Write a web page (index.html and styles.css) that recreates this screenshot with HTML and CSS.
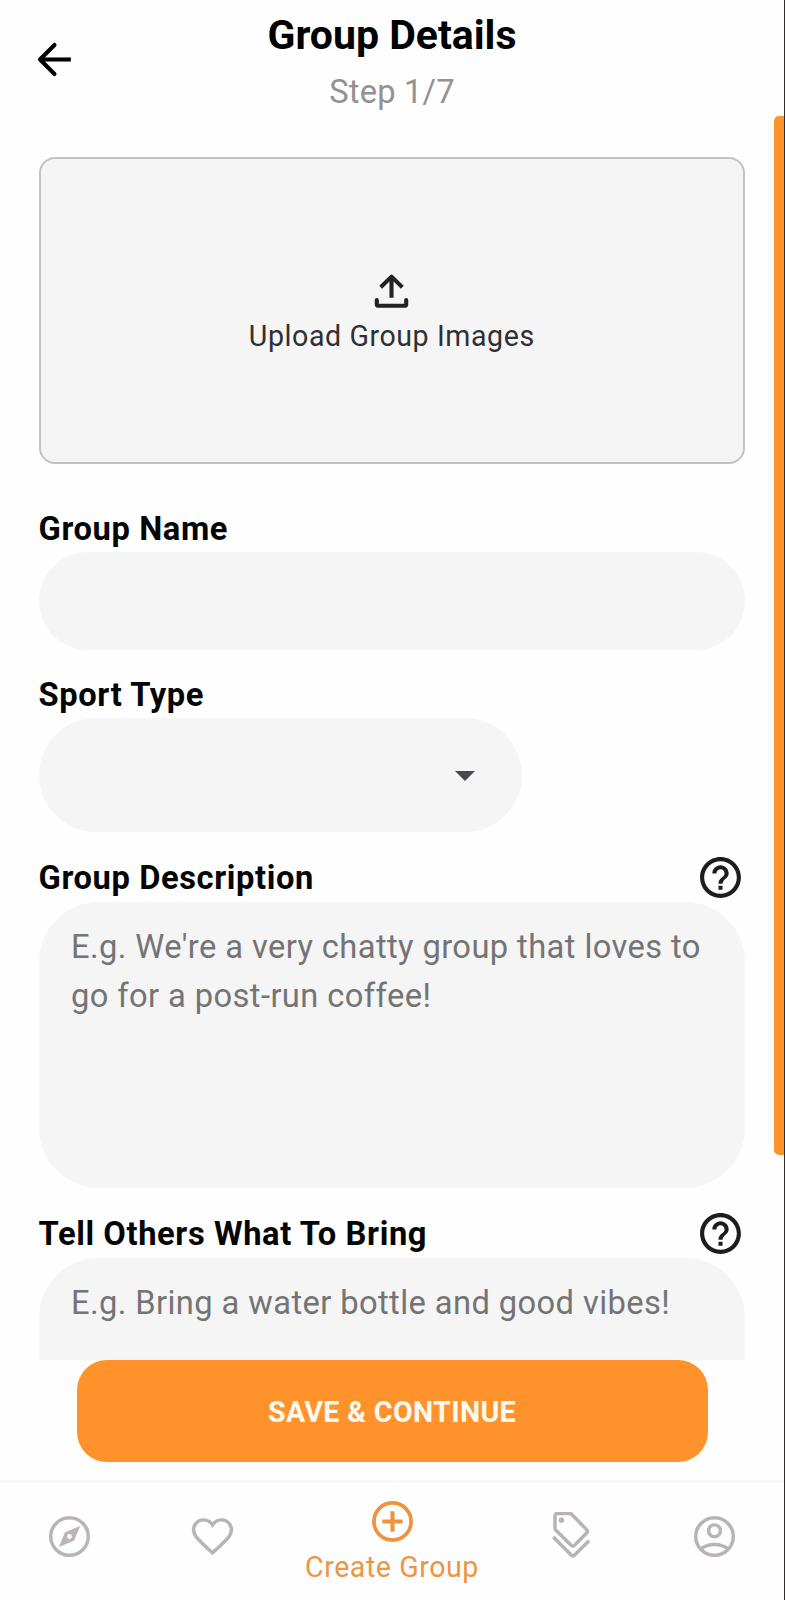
FILE: index.html
```html
<!DOCTYPE html>
<html lang="en">
<head>
<meta charset="utf-8">
<title>Group Details</title>
<link rel="stylesheet" href="styles.css">
</head>
<body>
<div class="app">
  <header class="header">
    <svg class="back" viewBox="0 0 24 24" fill="none" stroke="#000" stroke-width="2"><path d="M20 12H5"/><path d="M12 4.900 4.900 12l7.100 7.100" stroke-linecap="round" stroke-linejoin="round"/></svg>
    <div class="heading">
      <h1 class="title">Group Details</h1>
      <p class="step">Step 1/7</p>
    </div>
  </header>

  <main class="form">
    <div class="upload">
      <svg class="upload-icon" viewBox="0 0 24 24" fill="none" stroke="#222224" stroke-width="2" stroke-linecap="round" stroke-linejoin="round"><path d="M12 15V5.200M6.700 9.900 12 4.700l5.300 5.200" stroke-linecap="butt"/><path d="M4.800 16.200v2q0 .8.8.8h12.800q.8 0 .8-.8v-2"/></svg>
      <span class="upload-text">Upload Group Images</span>
    </div>

    <div class="label-row label-first"><h2 class="label">Group Name</h2></div>
    <div class="field field-name"></div>

    <div class="label-row label-sport"><h2 class="label">Sport Type</h2></div>
    <div class="field field-sport"><svg class="caret" viewBox="0 0 20 10"><path d="M0 0h20L10 10z" fill="#4b474e"/></svg></div>

    <div class="label-row label-help">
      <h2 class="label">Group Description</h2>
      <svg class="help" viewBox="0 0 24 24"><path fill="#1d1d1f" d="M11 18h2v-2h-2v2zm1-16C6.480 2 2 6.480 2 12s4.480 10 10 10 10-4.480 10-10S17.520 2 12 2zm0 18c-4.410 0-8-3.590-8-8s3.590-8 8-8 8 3.590 8 8-3.590 8-8 8zm0-14c-2.210 0-4 1.790-4 4h2c0-1.100.9-2 2-2s2 .9 2 2c0 2-3 1.750-3 5h2c0-2.250 3-2.500 3-5 0-2.210-1.790-4-4-4z"/></svg>
    </div>
    <div class="field field-area">E.g. We're a very chatty group that loves to<br>go for a post-run coffee!</div>

    <div class="label-row label-help">
      <h2 class="label">Tell Others What To Bring</h2>
      <svg class="help" viewBox="0 0 24 24"><path fill="#1d1d1f" d="M11 18h2v-2h-2v2zm1-16C6.480 2 2 6.480 2 12s4.480 10 10 10 10-4.480 10-10S17.520 2 12 2zm0 18c-4.410 0-8-3.590-8-8s3.590-8 8-8 8 3.590 8 8-3.590 8-8 8zm0-14c-2.210 0-4 1.790-4 4h2c0-1.100.9-2 2-2s2 .9 2 2c0 2-3 1.750-3 5h2c0-2.250 3-2.500 3-5 0-2.210-1.790-4-4-4z"/></svg>
    </div>
    <div class="field field-area">E.g. Bring a water bottle and good vibes!</div>
  </main>

  <div class="actions"><button class="save">SAVE &amp; CONTINUE</button></div>

  <nav class="nav">
    <a class="tab"><svg class="nav-icon" viewBox="0 0 24 24"><circle cx="12" cy="12" r="9.200" fill="none" stroke="#bcb4b4" stroke-width="1.700"/><path fill="#bcb4b4" fill-rule="evenodd" d="M6.800 17.200 9.800 9.900 17.200 6.800 14.200 14.100zM12 10.800a1.200 1.200 0 1 0 0 2.400 1.200 1.200 0 0 0 0-2.400z"/></svg></a>
    <a class="tab"><svg class="nav-icon" viewBox="0 0 24 24"><path fill="none" stroke="#b9b3b4" stroke-width="1.700" d="M12 20C8.500 16.800 5.800 14.500 4.100 12.300 2.500 10.200 2.400 7.800 3.600 6 5.500 3.100 9.800 3.100 12 6.300c2.200-3.200 6.500-3.200 8.400-.3 1.200 1.800 1.100 4.200-.5 6.300C18.200 14.500 15.500 16.800 12 20z"/></svg></a>
    <a class="tab tab-active"><svg class="nav-icon" viewBox="0 0 24 24" fill="none" stroke="#f0923a"><circle cx="12" cy="12" r="9.100" stroke-width="1.800"/><path stroke-width="2" d="M12 7v10M7 12h10"/></svg><span class="tab-text">Create Group</span></a>
    <a class="tab"><svg class="nav-icon" viewBox="0 0 49 49" fill="none" stroke="#b9b3b4" stroke-width="3.500" stroke-linejoin="round"><path d="M8 4.200q0-2.700 2.700-2.700h12.200q1 0 1.800.8l14.900 15.300q1.700 1.800 0 3.500L27.600 33.200q-1.700 1.700-3.400 0L8.700 18q-.7-.7-.7-1.700z"/><path d="M6.300 25 24.200 43q1.700 1.700 3.400 0L42 28.800"/><circle cx="14.400" cy="8.300" r="2.700" fill="#b9b3b4" stroke="none"/></svg></a>
    <a class="tab"><svg class="nav-icon" viewBox="0 0 24 24" fill="none" stroke="#b9b3b4" stroke-width="1.700"><circle cx="12" cy="12" r="9.200"/><circle cx="12" cy="9.200" r="2.900"/><path d="M5.400 18C7 16.700 9.300 15.900 12 15.900s5 .8 6.600 2.100"/></svg></a>
  </nav>
  <div class="scrollbar"></div>
</div>
</body>
</html>
```
FILE: styles.css
```css
* { box-sizing: border-box; }
body { margin: 0; background: #fefefe; font-family: Roboto, "Liberation Sans", sans-serif; }
.app { position: relative; display: flex; flex-direction: column; width: 785px; height: 1600px; overflow: hidden; background: #fefefe; border-right: 1px solid #302c2a; }
.header { display: grid; grid-template-columns: 80px 1fr 80px; flex: none; height: 117px; }
.back { width: 49px; height: 49px; margin: 34.500px 0 0 30px; }
.heading { text-align: center; }
.title { margin: 11px 0 0; font-size: 41px; line-height: 49px; font-weight: 700; color: #000; white-space: nowrap; }
.step { margin: 12px 0 0; font-size: 32.700px; line-height: 40px; color: #929292; letter-spacing: .2px; }
.form { flex: none; height: 1243px; padding: 40px 39px 0 38.500px; overflow: hidden; }
.upload { display: flex; flex-direction: column; align-items: center; height: 307px; padding-top: 108px; background: #f5f5f5; border: 2px solid #c5c1c1; border-radius: 16px; }
.upload-icon { width: 49px; height: 49px; }
.upload-text { font-size: 28.600px; line-height: 36px; margin-top: 2px; letter-spacing: .57px; color: #303032; }
.label-row { display: flex; justify-content: space-between; align-items: center; }
.label { margin: 0; font-size: 32.700px; line-height: 40px; font-weight: 700; letter-spacing: .6px; color: #050506; white-space: nowrap; }
.label-first { height: 88px; padding-top: 41px; }
.label-sport { height: 68px; padding-top: 21px; }
.label-help { height: 70px; padding-top: 20px; }
.label-help .label { padding-top: 2px; }
.help { width: 49px; height: 49px; }
.field { background: #f5f5f5; color: #747474; }
.field-name { height: 98px; border-radius: 49px; }
.field-sport { display: flex; justify-content: flex-end; align-items: center; width: 483.500px; height: 114px; padding: 1px 47.500px 0 0; border-radius: 57px; }
.caret { width: 20px; height: 10px; }
.field-area { height: 286px; padding: 21px 32.500px; border-radius: 60px; font-size: 32.700px; line-height: 49px; letter-spacing: .4px; white-space: nowrap; }
.actions { display: flex; justify-content: center; flex: none; height: 120px; }
.save { width: 631px; height: 102px; padding: 1px 0 0; border: 0; border-radius: 30px; background: #ff922b; color: #fffaf0; font-family: inherit; font-size: 28.600px; font-weight: 700; letter-spacing: .35px; }
.nav { display: grid; grid-template-columns: 143px 143px 216px 143px 143px; justify-content: center; flex: none; height: 120px; border-top: 3px solid #f8f8f8; }
.tab { display: flex; flex-direction: column; align-items: center; padding-top: 28.500px; }
.tab-active { padding-top: 14px; }
.nav-icon { width: 49px; height: 49px; }
.tab-text { font-size: 28.600px; line-height: 36px; margin-top: 3px; letter-spacing: .55px; color: #ea9645; white-space: nowrap; }
.scrollbar { position: absolute; top: 116px; right: 0; width: 10px; height: 1039px; border-radius: 5px 0 0 5px; background: #ff922b; }
```
